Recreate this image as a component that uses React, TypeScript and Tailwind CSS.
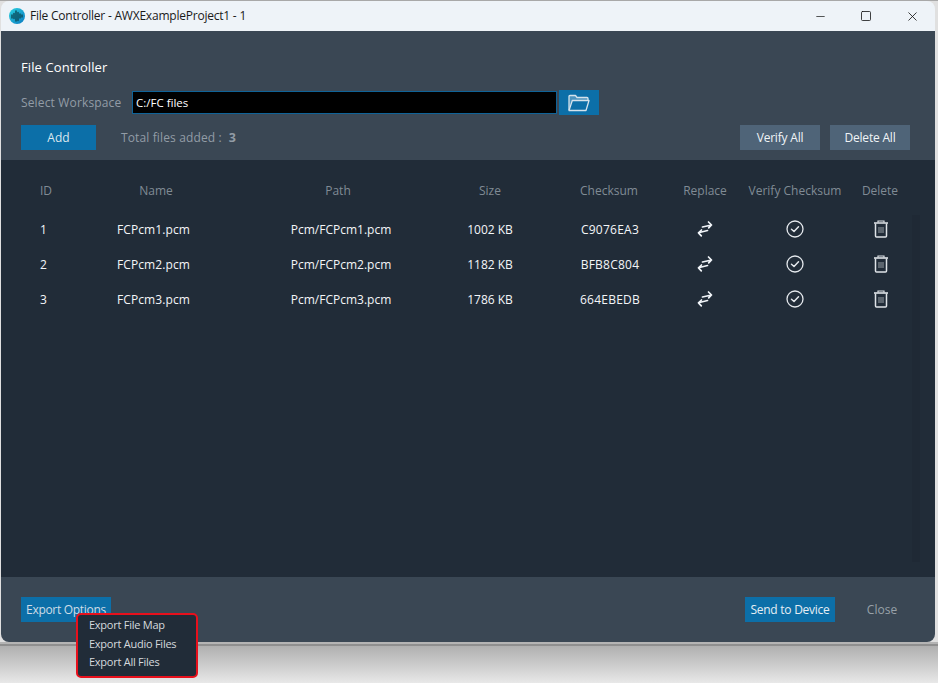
import React from "react";
import { Minus, Square, X } from "lucide-react";

const font = { fontFamily: '"Open Sans", "Noto Sans", sans-serif' };

const rows = [
  ["1", "FCPcm1.pcm", "Pcm/FCPcm1.pcm", "1002 KB", "C9076EA3"],
  ["2", "FCPcm2.pcm", "Pcm/FCPcm2.pcm", "1182 KB", "BFB8C804"],
  ["3", "FCPcm3.pcm", "Pcm/FCPcm3.pcm", "1786 KB", "664EBEDB"],
];

const gridCols = "grid pl-[30px] grid-cols-[30px_190px_174px_130px_108px_84px_96px_74px]";

function Logo() {
  return (
    <svg width="16" height="16" viewBox="0 0 16 16">
      <defs>
        <linearGradient id="lg" x1="0" y1="0" x2="1" y2="1">
          <stop offset="0" stopColor="#2bd3e0" />
          <stop offset="1" stopColor="#0a78c0" />
        </linearGradient>
      </defs>
      <circle cx="8" cy="8" r="8" fill="url(#lg)" />
      <path d="M3 7v3M5 5.500v5M7 3v10M9 4.500v8M11 6v4M13 7v2" fill="none" stroke="#0a4a58" strokeWidth="1.400" strokeLinecap="round" />
    </svg>
  );
}

function FolderIcon() {
  return (
    <svg width="22" height="18" viewBox="0 0 22 18" fill="none" stroke="#d5e3ec" strokeWidth="1.300" strokeLinejoin="round">
      <path d="M1 16V2.500A1 1 0 0 1 2 1.500h5.500l1.500 2h10a1 1 0 0 1 1 1V6" fill="#7fb0cf" fillOpacity="0.55" />
      <path d="M1 16.500L4.300 6.500H21L18 16.500Z" fill="#0c6fa8" />
    </svg>
  );
}

function SwapIcon() {
  return (
    <svg width="18" height="18" viewBox="0 0 18 18" fill="none" stroke="#f1f5f9" strokeWidth="1.700" strokeLinecap="round" strokeLinejoin="round">
      <path d="M6.500 7 L15.500 5 M12.500 2 L15.500 5 L12.700 7.800" />
      <path d="M11.500 10.500 L2.500 12.800 M5.500 10 L2.500 12.800 L5.300 15.800" />
    </svg>
  );
}

function CheckIcon() {
  return (
    <svg width="18" height="18" viewBox="0 0 18 18" fill="none" stroke="#e5e9ed" strokeWidth="1.300" strokeLinecap="round" strokeLinejoin="round">
      <circle cx="9" cy="9" r="8" />
      <path d="M5.500 9.300 L8 11.500 L12.500 6.800" strokeWidth="1.500" />
    </svg>
  );
}

function TrashIcon() {
  return (
    <svg width="16" height="18" viewBox="0 0 16 18" fill="none" stroke="#dfe3e7" strokeWidth="1.500">
      <path d="M1 3h14" strokeWidth="1.600" />
      <path d="M5 2.600V1h6v1.600" strokeWidth="1.200" />
      <path d="M2.500 3.500v12.500a1 1 0 0 0 1 1h9a1 1 0 0 0 1-1V3.500" />
      <path d="M6 7v6M8 7v6M10 7v6" stroke="#8d959c" strokeWidth="1.100" />
    </svg>
  );
}

export default function App() {
  return (
    <div className="relative w-[938px] h-[683px] overflow-hidden bg-[#e0e0e0] text-[12px]" style={font}>
      <div className="h-px bg-[#a8a8a8]" />
      <div className="w-[934px] h-[641px] ml-px flex flex-col rounded-lg overflow-hidden">
        {/* Title bar */}
        <div className="h-[30px] shrink-0 bg-[#eef3f8] flex items-center pl-2 text-[#1a1a1a]">
          <Logo />
          <span className="ml-[5px] text-[12px] tracking-[-0.22px]">File Controller - AWXExampleProject1 - 1</span>
          <div className="ml-auto flex items-center text-[#111111]">
            <div className="w-[46px] flex justify-center"><Minus size={13} strokeWidth={1.300} /></div>
            <div className="w-[46px] flex justify-center"><Square size={12} strokeWidth={1.600} /></div>
            <div className="w-[46px] flex justify-center"><X size={15} strokeWidth={1.300} /></div>
          </div>
        </div>

        {/* Header */}
        <div className="h-[129px] shrink-0 bg-[#3a4754] pl-5 pr-[25px] pt-[27px]">
          <div className="text-white text-[13px] leading-[18px] tracking-[0.1px]">File Controller</div>
          <div className="flex items-center mt-[14px] h-[25px]">
            <span className="w-[111px] text-[#929ca6] text-[12px] tracking-[0.15px]">Select Workspace</span>
            <div className="w-[425px] h-[23px] bg-black border border-[#0f6398] text-white flex items-center pl-[3px] text-[11.5px]">C:/FC files</div>
            <div className="ml-[2px] w-[40px] h-[25px] bg-[#0c6fa8] flex items-center justify-center">
              <FolderIcon />
            </div>
          </div>
          <div className="flex items-center mt-[10px] h-[25px]">
            <button className="w-[75px] h-[25px] pt-px bg-[#0c6fa8] text-[#dbe7ef] text-[12px]">Add</button>
            <span className="ml-[25px] pt-px text-[#929ca6] text-[12px] tracking-[0.13px]">Total files added :</span>
            <span className="ml-[7px] pt-px text-[#929ca6] text-[12.5px] font-bold">3</span>
            <button className="ml-auto w-[80px] h-[25px] pt-px bg-[#4f6478] text-[#f0f4f7] text-[12px] tracking-[-0.2px]">Verify All</button>
            <button className="ml-[10px] w-[80px] h-[25px] pt-px bg-[#4f6478] text-[#f0f4f7] text-[12px] tracking-[-0.2px]">Delete All</button>
          </div>
        </div>

        {/* Table */}
        <div className="h-[417px] shrink-0 bg-[#212c38] relative">
          <div className={`${gridCols} pt-[22px] h-[52px] text-[#808b95] text-[12px]`}>
            {["ID", "Name", "Path", "Size", "Checksum", "Replace", "Verify Checksum", "Delete"].map((h) => (
              <div key={h} className="text-center whitespace-nowrap">{h}</div>
            ))}
          </div>
          {rows.map((r) => (
            <div key={r[0]} className={`${gridCols} h-[35px] items-center text-[#f4f6f8] text-[12px]`}>
              <div className="text-center pr-[5px]">{r[0]}</div>
              <div className="text-center pr-[5px] tracking-[0.1px]">{r[1]}</div>
              <div className="text-center pl-[6px]">{r[2]}</div>
              <div className="text-center">{r[3]}</div>
              <div className="text-center pl-[2px] tracking-[0.25px]">{r[4]}</div>
              <div className="flex justify-center pb-[2px]"><SwapIcon /></div>
              <div className="flex justify-center pb-[2px]"><CheckIcon /></div>
              <div className="flex justify-center pb-[2px] pl-px"><TrashIcon /></div>
            </div>
          ))}
          <div className="absolute left-[911px] top-[55px] bottom-[15px] w-[8px] bg-[#1f2935]" />
        </div>

        {/* Footer */}
        <div className="flex-1 bg-[#3a4754] flex items-start px-5 pt-[20px]">
          <button className="w-[90px] h-[25px] bg-[#0c6fa8] text-[#cfdde7] text-[12px] tracking-[-0.3px]">Export Options</button>
          <button className="ml-auto w-[90px] h-[25px] bg-[#0c6fa8] text-[#e6eef4] text-[12px] tracking-[-0.25px]">Send to Device</button>
          <button className="ml-[14px] w-[66px] h-[25px] text-[#98a1a9] text-[12px]">Close</button>
        </div>
      </div>

      {/* Desktop below the window */}
      <div className="h-[2px] bg-[#b4b4b4]" />
      <div className="h-[2px] bg-[#8f8f8f]" />
      <div className="h-[37px] bg-gradient-to-b from-[#b0b0b0] to-[#e8e8e8]" />

      {/* Export menu */}
      <div className="absolute left-[76px] top-[613px] w-[122px] h-[65px] bg-[#212c38] border-2 border-[#e8101c] rounded-[5px] pl-[11px] pt-[1px] text-[#d5dade] text-[11px] tracking-[-0.25px] leading-[18.500px]">
        <div>Export File Map</div>
        <div>Export Audio Files</div>
        <div>Export All Files</div>
      </div>
    </div>
  );
}
